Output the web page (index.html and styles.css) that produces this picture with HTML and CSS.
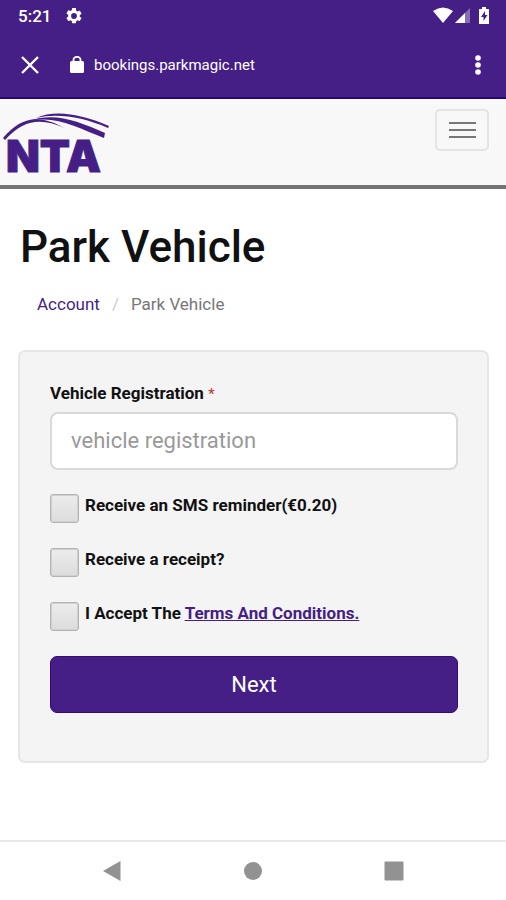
FILE: index.html
```html
<!DOCTYPE html>
<html lang="en">
<head>
<meta charset="utf-8">
<meta name="viewport" content="width=device-width, initial-scale=1">
<title>Park Vehicle</title>
<link rel="stylesheet" href="styles.css">
</head>
<body>
<div class="status">
  <span class="time">5:21</span>
  <svg class="gear" width="16" height="16" viewBox="2 2 20 20" aria-hidden="true"><path fill="currentColor" d="M19.14 12.94c.04-.3.06-.61.06-.94s-.02-.64-.07-.94l2.03-1.58a.49.49 0 0 0 .12-.61l-1.92-3.32a.49.49 0 0 0-.59-.22l-2.39.96a7 7 0 0 0-1.62-.94l-.36-2.54A.48.48 0 0 0 13.92 2h-3.84a.48.48 0 0 0-.47.41l-.36 2.54c-.59.24-1.13.57-1.62.94l-2.39-.96a.48.48 0 0 0-.59.22L2.74 8.47a.48.48 0 0 0 .12.61l2.03 1.58c-.05.3-.09.63-.09.94s.02.64.07.94l-2.03 1.58a.49.49 0 0 0-.12.61l1.92 3.32c.12.22.37.29.59.22l2.39-.96c.5.38 1.03.7 1.62.94l.36 2.54c.05.24.24.41.48.41h3.84c.24 0 .44-.17.47-.41l.36-2.54a7 7 0 0 0 1.62-.94l2.39.96c.22.08.47 0 .59-.22l1.92-3.32a.48.48 0 0 0-.12-.61zM12 15.6a3.6 3.6 0 1 1 0-7.2 3.6 3.6 0 0 1 0 7.2z"/></svg>
  <svg class="signals" width="57" height="18" viewBox="0 0 57 18" aria-hidden="true">
    <path fill="currentColor" d="M0 4Q10-3 20 4L10 16z"/>
    <path fill="currentColor" opacity=".35" d="M37 1v15H22z"/>
    <path fill="currentColor" d="M32 6v10H22z"/>
    <path fill="currentColor" d="M49 0h4v2h3v15H46V2h3z"/>
    <path fill="#451f86" d="M52 4l-4 6h2.500v4l4-6H52z"/>
  </svg>
</div>
<header class="toolbar">
  <button class="tool" type="button" aria-label="Close"><svg width="20" height="20" viewBox="0 0 20 20"><path d="M2 2l16 16M18 2L2 18" fill="none" stroke="currentColor" stroke-width="2.400"/></svg></button>
  <svg class="lock" width="14" height="18" viewBox="0 0 14 18" aria-hidden="true"><rect y="5" width="14" height="12" rx="1.500" fill="currentColor"/><path d="M3.500 6V4a3.500 3.200 0 0 1 7 0V6" fill="none" stroke="currentColor" stroke-width="1.800"/></svg>
  <span class="url">bookings.parkmagic.net</span>
  <button class="tool more" type="button" aria-label="More options"><svg width="6" height="22" viewBox="0 0 6 22" fill="currentColor"><circle cx="3" cy="4" r="2.800"/><circle cx="3" cy="11" r="2.800"/><circle cx="3" cy="18" r="2.800"/></svg></button>
</header>
<nav class="navbar" aria-label="Main">
  <a href="#" class="logo" aria-label="NTA home">
    <svg width="110" height="76" viewBox="0 0 110 76">
      <g fill="#451f86">
        <path d="M3 29C20 9 38 4 64 19C42 9 24 10 5 31z"/>
        <path d="M29 12C55 3 77 12 105 24L104 29C78 19 57 6 29 12z"/>
        <path d="M36 9C55 0 82 5 109 17L108 19C82 8 58 4 36 9z"/>
      </g>
      <text class="wordmark" x="6" y="63">NTA</text>
    </svg>
  </a>
  <button class="menu" type="button" aria-label="Toggle navigation"><span></span><span></span><span></span></button>
</nav>
<main class="page">
  <h1>Park Vehicle</h1>
  <ol class="breadcrumb">
    <li><a href="#">Account</a></li>
    <li>Park Vehicle</li>
  </ol>
  <form class="panel">
    <label class="field-label" for="reg">Vehicle Registration <span class="required">*</span></label>
    <input class="field" id="reg" type="text" placeholder="vehicle registration">
    <div class="check"><input type="checkbox" id="sms"><label for="sms">Receive an SMS reminder(€0.20)</label></div>
    <div class="check"><input type="checkbox" id="receipt"><label for="receipt">Receive a receipt?</label></div>
    <div class="check"><input type="checkbox" id="terms"><label for="terms">I Accept The <a href="#">Terms And Conditions.</a></label></div>
    <button class="next" type="button">Next</button>
  </form>
</main>
<footer class="system">
  <button type="button" aria-label="Back"><svg width="20" height="20" viewBox="0 0 20 20"><path fill="currentColor" d="M18.500 0v20L1 10z"/></svg></button>
  <button type="button" aria-label="Home"><svg width="20" height="20" viewBox="0 0 20 20"><circle cx="10" cy="10" r="9" fill="currentColor"/></svg></button>
  <button type="button" aria-label="Recent apps"><svg width="20" height="20" viewBox="0 0 20 20"><rect x=".5" y=".5" width="19" height="19" rx="1" fill="currentColor"/></svg></button>
</footer>
</body>
</html>
```
FILE: styles.css
```css
* { box-sizing: border-box; }

body {
  margin: 0;
  min-height: 100vh;
  display: flex;
  flex-direction: column;
  background: #fff;
  color: #111;
  font-family: Roboto, "Liberation Sans", sans-serif;
  font-size: 17px;
}

button { font: inherit; cursor: pointer; }
a { color: #451f86; }

.status,
.toolbar {
  display: flex;
  align-items: center;
  background: #451f86;
  color: #fff;
}

.status { height: 32px; padding: 0 16px 0 18px; }
.time { font-size: 17px; font-weight: 500; }
.gear { margin-left: 15px; }
.signals { margin-left: auto; }

.toolbar {
  height: 67px;
  padding: 0 25px 0 20px;
  border-bottom: 2px solid #27057a;
}

.tool {
  display: flex;
  padding: 0;
  border: 0;
  background: none;
  color: inherit;
}

.lock { margin: 0 10px 0 30px; }
.url { font-size: 15px; }
.more { margin-left: auto; }

.navbar {
  display: flex;
  justify-content: space-between;
  align-items: flex-start;
  padding: 10px 17px 0 0;
  background: #f8f8f8;
  border-bottom: 4px solid #747474;
}

.logo { display: flex; }

.wordmark {
  fill: #451f86;
  stroke: #451f86;
  stroke-width: 1px;
  font-family: Inter, "Liberation Sans", sans-serif;
  font-size: 44px;
  font-weight: 900;
}

.menu {
  display: flex;
  flex-direction: column;
  justify-content: center;
  align-items: center;
  gap: 5px;
  width: 54px;
  height: 42px;
  padding: 0;
  border: 2px solid #e4e4e4;
  border-radius: 5px;
  background: none;
}

.menu span { width: 27px; height: 2px; background: #777; }

.page { flex: 1; padding: 33px 17px 0 18px; }

h1 {
  margin: 0 2px;
  font-size: 44px;
  line-height: 50px;
  font-weight: 500;
}

.breadcrumb {
  display: flex;
  margin: 20px 0 34px;
  padding: 0 19px;
  list-style: none;
  color: #777;
  font-size: 17px;
  line-height: 24px;
}

.breadcrumb a { text-decoration: none; }
.breadcrumb li + li::before { content: "/"; padding: 0 12px; color: #ccc; }

.panel {
  padding: 29px 29px 48px 30px;
  border: 2px solid #e6e6e6;
  border-radius: 7px;
  background: #f4f4f4;
}

.field-label {
  display: block;
  margin-bottom: 6px;
  font-weight: 700;
  line-height: 24px;
}

.required { color: #c9302c; font-size: 15px; font-weight: 400; }

.field {
  display: block;
  width: 100%;
  height: 58px;
  margin-bottom: 24px;
  padding: 0 19px 2px;
  border: 2px solid #d9d9d9;
  border-radius: 8px;
  background: #fff;
  color: #333;
  font: inherit;
  font-size: 22px;
}

.field::placeholder { color: #999; opacity: 1; }

.check {
  display: flex;
  align-items: flex-start;
  gap: 6px;
  margin-bottom: 25px;
  font-weight: 700;
  line-height: 22px;
}

.check input {
  appearance: none;
  width: 29px;
  height: 29px;
  margin: 0;
  border: 1px solid #b4b4b4;
  border-radius: 3px;
  background: linear-gradient(#ececec, #dcdcdc);
  box-shadow: inset 0 0 0 1px #d0d0d0;
}

.check input:checked { background: #451f86; }

.next {
  display: block;
  width: 100%;
  height: 57px;
  border: 1px solid #35097c;
  border-radius: 7px;
  background: #451f86;
  color: #fff;
  font-size: 22px;
}

.system {
  display: flex;
  justify-content: space-around;
  align-items: center;
  height: 60px;
  padding: 0 42px;
  border-top: 2px solid #e8e8e8;
}

.system button {
  display: flex;
  padding: 0;
  border: 0;
  background: none;
  color: #929292;
}
```
